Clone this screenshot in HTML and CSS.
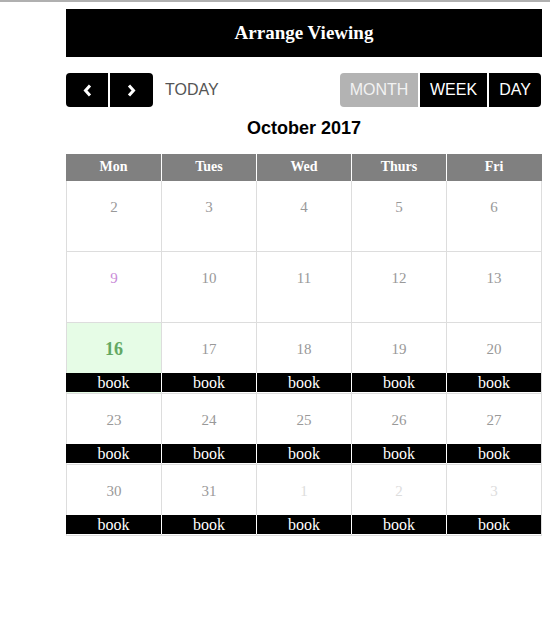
FILE: index.html
```html
<!DOCTYPE html>
<html>
<head>
<meta charset="utf-8">
<link rel="stylesheet" href="styles.css">
</head>
<body>
<div class="topline"></div>
<div class="wrap">
  <header class="banner">Arrange Viewing</header>
  <div class="toolbar">
    <div class="left">
      <div class="group">
        <button class="btn nav prev"><svg width="9" height="13" viewBox="0 0 9 13"><path d="M7 1.5 L2.5 6.5 L7 11.5" fill="none" stroke="#fff" stroke-width="3"/></svg></button>
        <button class="btn nav next"><svg width="9" height="13" viewBox="0 0 9 13"><path d="M2 1.5 L6.5 6.5 L2 11.5" fill="none" stroke="#fff" stroke-width="3"/></svg></button>
      </div>
      <span class="today">TODAY</span>
    </div>
    <div class="group">
      <button class="btn view month first active">MONTH</button>
      <button class="btn view week-btn">WEEK</button>
      <button class="btn view day-btn last">DAY</button>
    </div>
  </div>
  <h2 class="title">October 2017</h2>
  <div class="cal">
    <div class="dow"><div>Mon</div><div>Tues</div><div>Wed</div><div>Thurs</div><div>Fri</div></div>
    <div class="week">
      <div class="day"><div class="num">2</div></div>
      <div class="day"><div class="num">3</div></div>
      <div class="day"><div class="num">4</div></div>
      <div class="day"><div class="num">5</div></div>
      <div class="day"><div class="num">6</div></div>
    </div>
    <div class="week">
      <div class="day"><div class="num special">9</div></div>
      <div class="day"><div class="num">10</div></div>
      <div class="day"><div class="num">11</div></div>
      <div class="day"><div class="num">12</div></div>
      <div class="day"><div class="num">13</div></div>
    </div>
    <div class="week">
      <div class="day current"><div class="num">16</div><div class="book">book</div></div>
      <div class="day"><div class="num">17</div><div class="book">book</div></div>
      <div class="day"><div class="num">18</div><div class="book">book</div></div>
      <div class="day"><div class="num">19</div><div class="book">book</div></div>
      <div class="day"><div class="num">20</div><div class="book">book</div></div>
    </div>
    <div class="week">
      <div class="day"><div class="num">23</div><div class="book">book</div></div>
      <div class="day"><div class="num">24</div><div class="book">book</div></div>
      <div class="day"><div class="num">25</div><div class="book">book</div></div>
      <div class="day"><div class="num">26</div><div class="book">book</div></div>
      <div class="day"><div class="num">27</div><div class="book">book</div></div>
    </div>
    <div class="week">
      <div class="day"><div class="num">30</div><div class="book">book</div></div>
      <div class="day"><div class="num">31</div><div class="book">book</div></div>
      <div class="day other"><div class="num">1</div><div class="book">book</div></div>
      <div class="day other"><div class="num">2</div><div class="book">book</div></div>
      <div class="day other"><div class="num">3</div><div class="book">book</div></div>
    </div>
  </div>
</div>
</body>
</html>
```

FILE: styles.css
```css
html, body {
  margin: 0;
  padding: 0;
  background: #fff;
}
body {
  font-family: "Liberation Serif", serif;
}
.topline {
  height: 2px;
  background: #b0b0b0;
}
.wrap {
  width: 476px;
  margin: 7px 0 0 66px;
}
.banner {
  height: 48px;
  background: #000;
  color: #fff;
  font: bold 19px/48px "Liberation Serif", serif;
  text-align: center;
}
.toolbar {
  display: flex;
  justify-content: space-between;
  align-items: center;
  margin-top: 16px;
  height: 34px;
  padding-right: 1px;
}
.left {
  display: flex;
  align-items: center;
}
.group {
  display: flex;
  gap: 2px;
}
.btn {
  height: 34px;
  border: 0;
  margin: 0;
  padding: 0;
  background: #000;
  color: #fff;
  font: 16px/34px "Liberation Sans", sans-serif;
  display: flex;
  align-items: center;
  justify-content: center;
}
.nav {
  width: 42px;
}
.prev {
  border-radius: 4px 0 0 4px;
}
.next {
  width: 43px;
  border-radius: 0 4px 4px 0;
}
.today {
  margin-left: 12px;
  font: 16px "Liberation Sans", sans-serif;
  color: #555;
}
.view.month {
  width: 78px;
}
.view.week-btn {
  width: 67px;
}
.view.day-btn {
  width: 52px;
}
.view.first {
  border-radius: 4px 0 0 4px;
}
.view.last {
  border-radius: 0 4px 4px 0;
}
.view.active {
  background: #b3b3b3;
  color: #f2f2f2;
}
.title {
  margin: 0;
  padding-top: 10px;
  height: 37px;
  font: bold 18px/22px "Liberation Sans", sans-serif;
  text-align: center;
  color: #000;
}
.dow {
  display: grid;
  grid-template-columns: 96px repeat(4, 95px);
  background: #808080;
  height: 27px;
}
.dow div {
  border-right: 1px solid #fff;
  color: #fff;
  font: bold 14px/26px "Liberation Serif", serif;
  text-align: center;
}
.dow div:last-child {
  border-right-color: #808080;
}
.week {
  display: grid;
  grid-template-columns: repeat(5, 95px);
  border-left: 1px solid #ddd;
}
.day {
  height: 71px;
  box-sizing: border-box;
  border-right: 1px solid #ddd;
  border-bottom: 1px solid #ddd;
  display: flex;
  flex-direction: column;
}
.num {
  box-sizing: border-box;
  height: 50px;
  padding-top: 17px;
  font: 15px/18px "Liberation Serif", serif;
  color: #999;
  text-align: center;
}
.num.special {
  color: #c98ad8;
}
.current {
  background: #e6fce6;
}
.current .num {
  font-weight: bold;
  font-size: 18px;
  color: #63a863;
}
.other .num {
  color: #ddd;
}
.book {
  height: 19px;
  margin-right: -1px;
  border-right: 1px solid #fff;
  background: #000;
  color: #fff;
  font: 16px/19px "Liberation Serif", serif;
  text-align: center;
}
.day:first-child .book {
  margin-left: -1px;
}
.day:last-child .book {
  border-right-color: #ddd;
}
```
